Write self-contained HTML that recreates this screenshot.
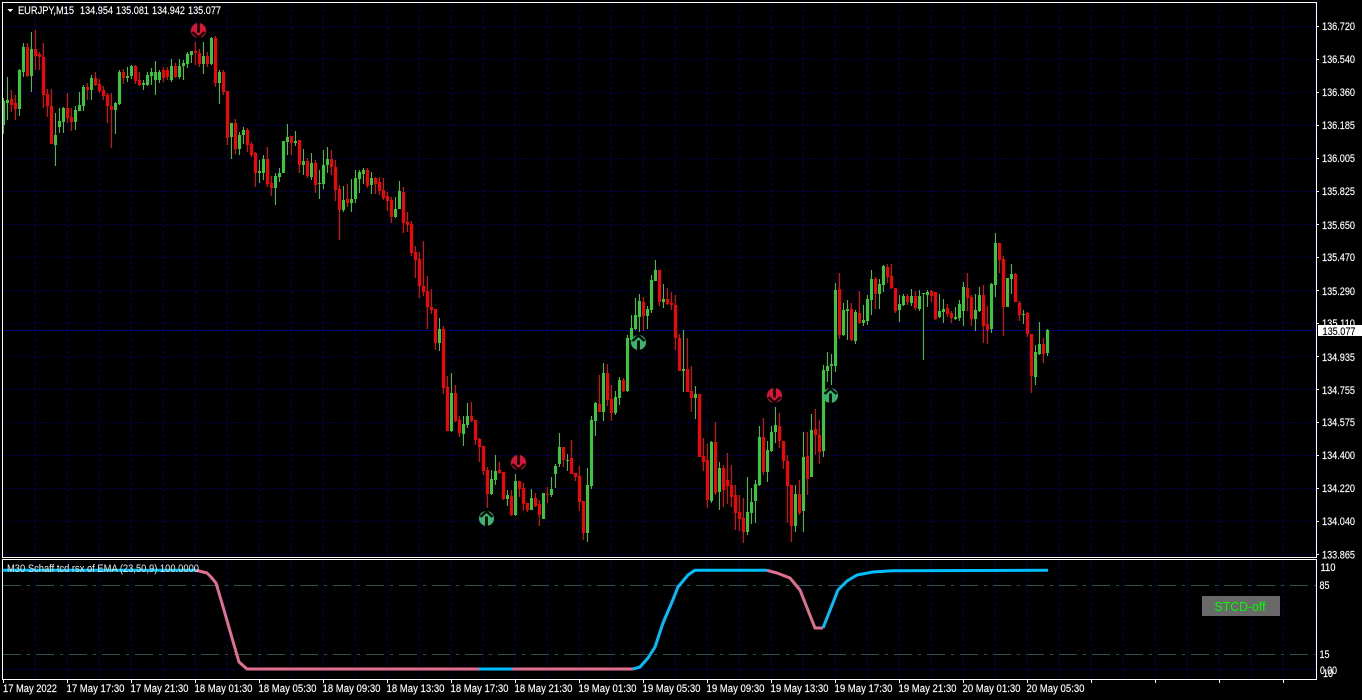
<!DOCTYPE html>
<html lang="en">
<head>
<meta charset="utf-8">
<title>EURJPY,M15</title>
<style>
html,body{margin:0;padding:0;background:#000;width:1362px;height:700px;overflow:hidden}
svg{display:block}
text{font-family:"Liberation Sans",Arial,sans-serif;font-size:11px;fill:#fff;stroke:#fff;stroke-width:.15px}
</style>
</head>
<body>
<svg width="1362" height="700" viewBox="0 0 1362 700" xmlns="http://www.w3.org/2000/svg">
<rect width="1362" height="700" fill="#000"/>
<!-- grid -->
<g shape-rendering="crispEdges" fill="none" stroke="#00005a" stroke-width="1" stroke-dasharray="3 3">
<path d="M3 26.5H1316M3 59.5H1316M3 92.5H1316M3 125.5H1316M3 158.5H1316M3 191.5H1316M3 224.5H1316M3 257.5H1316M3 290.5H1316M3 323.5H1316M3 356.5H1316M3 389.5H1316M3 422.5H1316M3 455.5H1316M3 488.5H1316M3 521.5H1316M3 554.5H1316M3 669.5H1316"/>
<path d="M35.5 3V557M67.5 3V557M99.5 3V557M131.5 3V557M163.5 3V557M195.5 3V557M227.5 3V557M259.5 3V557M291.5 3V557M323.5 3V557M355.5 3V557M387.5 3V557M419.5 3V557M451.5 3V557M483.5 3V557M515.5 3V557M547.5 3V557M579.5 3V557M611.5 3V557M643.5 3V557M675.5 3V557M707.5 3V557M739.5 3V557M771.5 3V557M803.5 3V557M835.5 3V557M867.5 3V557M899.5 3V557M931.5 3V557M963.5 3V557M995.5 3V557M1027.5 3V557M1059.5 3V557M1091.5 3V557M1123.5 3V557M1155.5 3V557M1187.5 3V557M1219.5 3V557M1251.5 3V557M1283.5 3V557M1315.5 3V557"/>
<path d="M35.5 560V679M67.5 560V679M99.5 560V679M131.5 560V679M163.5 560V679M195.5 560V679M227.5 560V679M259.5 560V679M291.5 560V679M323.5 560V679M355.5 560V679M387.5 560V679M419.5 560V679M451.5 560V679M483.5 560V679M515.5 560V679M547.5 560V679M579.5 560V679M611.5 560V679M643.5 560V679M675.5 560V679M707.5 560V679M739.5 560V679M771.5 560V679M803.5 560V679M835.5 560V679M867.5 560V679M899.5 560V679M931.5 560V679M963.5 560V679M995.5 560V679M1027.5 560V679M1059.5 560V679M1091.5 560V679M1123.5 560V679M1155.5 560V679M1187.5 560V679M1219.5 560V679M1251.5 560V679M1283.5 560V679M1315.5 560V679"/>
</g>
<!-- current price line -->
<path d="M3 330.5H1316" stroke="#000070" stroke-width="1" shape-rendering="crispEdges"/>
<!-- green wicks -->
<path shape-rendering="crispEdges" fill="none" stroke="#32cd32" stroke-width="1" d="M3.5 98V134M7.5 77V120M19.5 69V116M23.5 43V77M31.5 32V92M55.5 113V166M59.5 108V133M63.5 107V133M75.5 106V130M79.5 92V111M83.5 85V111M91.5 75V100M115.5 102V134M119.5 70V105M127.5 67V82M131.5 65V79M143.5 80V90M147.5 72V86M151.5 68V85M155.5 61V95M159.5 70V83M171.5 59V82M179.5 59V79M183.5 60V80M187.5 52V68M191.5 51V63M203.5 42V74M211.5 37V65M219.5 70V104M231.5 123V159M239.5 132V155M243.5 127V144M259.5 160V183M263.5 155V180M275.5 173V205M279.5 168V182M283.5 141V173M287.5 124V155M295.5 131V146M303.5 149V175M311.5 153V180M319.5 170V199M323.5 150V189M327.5 147V173M343.5 186V212M351.5 179V212M355.5 170V203M359.5 170V193M363.5 168V184M371.5 172V194M395.5 197V218M399.5 181V209M439.5 318V351M451.5 373V432M463.5 416V446M467.5 403V428M491.5 470V495M495.5 455V485M507.5 490V506M515.5 474V516M531.5 489V510M543.5 493V519M551.5 477V497M555.5 464V488M559.5 433V467M567.5 454V471M587.5 468V542M591.5 416V489M595.5 402V436M603.5 363V421M615.5 391V415M619.5 377V405M627.5 335V392M631.5 315V340M635.5 298V330M639.5 294V332M647.5 306V329M651.5 275V313M655.5 260V281M663.5 284V308M683.5 330V392M695.5 386V419M711.5 441V503M719.5 462V510M747.5 477V535M751.5 488V524M755.5 480V523M759.5 426V486M767.5 441V482M771.5 426V452M775.5 407V443M795.5 485V532M803.5 432V532M811.5 414V477M823.5 365V457M827.5 352V382M831.5 354V385M835.5 283V372M843.5 303V336M847.5 300V340M855.5 310V344M863.5 305V326M867.5 295V325M871.5 270V315M879.5 279V309M883.5 265V292M899.5 295V322M903.5 294V306M911.5 289V306M919.5 290V311M923.5 293V360M927.5 290V307M939.5 294V318M943.5 299V323M955.5 307V320M959.5 300V321M963.5 282V326M975.5 294V331M979.5 287V312M991.5 283V333M995.5 233V297M1007.5 278V307M1011.5 264V294M1023.5 310V324M1035.5 345V385M1039.5 322V355M1047.5 329V356"/>
<!-- green bodies -->
<path shape-rendering="crispEdges" fill="none" stroke="#32cd32" stroke-width="3" d="M3.5 101V125M7.5 100V103M19.5 70V109M23.5 47V72M31.5 49V76M55.5 135V145M59.5 121V127M63.5 108V122M75.5 110V122M79.5 105V111M83.5 87V106M91.5 78V90M115.5 103V110M119.5 72V104M127.5 76V78M131.5 66V76M143.5 83V85M147.5 75V85M151.5 72V76M155.5 72V80M159.5 72V80M171.5 66V80M179.5 66V77M183.5 63V66M187.5 54V64M191.5 51V55M203.5 56V64M211.5 38V64M219.5 72V83M231.5 123V137M239.5 135V149M243.5 130V135M259.5 171V173M263.5 159V173M275.5 176V188M279.5 173V177M283.5 141V173M287.5 137V142M295.5 141V143M303.5 161V165M311.5 163V177M319.5 183V184M323.5 165V184M327.5 159V165M343.5 200V210M351.5 199V203M355.5 178V199M359.5 172V179M363.5 170V174M371.5 178V185M395.5 209V217M399.5 191V209M439.5 329V343M451.5 393V431M463.5 424V434M467.5 416V425M491.5 479V494M495.5 471V480M507.5 495V499M515.5 481V515M531.5 498V510M543.5 493V519M551.5 489V495M555.5 466V474M559.5 447V464M567.5 460V461M587.5 485V533M591.5 420V486M595.5 403V421M603.5 373V412M615.5 397V413M619.5 380V398M627.5 338V391M631.5 328V340M635.5 315V329M639.5 301V317M647.5 309V316M651.5 280V310M655.5 270V281M663.5 299V302M683.5 369V371M695.5 394V398M711.5 442V501M719.5 468V492M747.5 512V532M751.5 502V513M755.5 484V501M759.5 437V485M767.5 450V472M771.5 432V451M775.5 425V432M795.5 494V526M803.5 457V511M811.5 430V477M823.5 370V451M827.5 366V371M831.5 364V366M835.5 290V366M843.5 310V335M847.5 309V311M855.5 312V341M863.5 320V323M867.5 299V321M871.5 279V300M879.5 284V294M883.5 266V285M899.5 304V310M903.5 296V305M911.5 296V303M919.5 296V309M923.5 293V294M927.5 292V295M939.5 311V317M943.5 309V312M955.5 317V319M959.5 304V318M963.5 287V311M975.5 310V319M979.5 295V311M991.5 284V329M995.5 243V285M1007.5 278V307M1011.5 274V279M1023.5 314V315M1035.5 352V377M1039.5 344V354M1047.5 330V353"/>
<!-- red wicks -->
<path shape-rendering="crispEdges" fill="none" stroke="#ff0000" stroke-width="1" d="M11.5 90V112M15.5 95V120M27.5 43V77M35.5 30V70M39.5 52V70M43.5 43V108M47.5 89V117M51.5 89V144M67.5 93V123M71.5 108V131M87.5 83V100M95.5 72V86M99.5 79V93M103.5 86V100M107.5 93V123M111.5 93V148M123.5 69V84M135.5 65V84M139.5 72V86M163.5 67V82M167.5 67V80M175.5 63V78M195.5 42V65M199.5 49V67M207.5 52V67M215.5 36V87M223.5 70V95M227.5 91V145M235.5 119V154M247.5 128V152M251.5 142V157M255.5 152V187M267.5 147V187M271.5 176V196M291.5 136V155M299.5 140V173M307.5 158V178M315.5 160V193M331.5 150V175M335.5 160V201M339.5 185V240M347.5 184V207M367.5 168V188M375.5 177V194M379.5 177V195M383.5 178V200M387.5 192V211M391.5 197V223M403.5 187V233M407.5 212V232M411.5 221V256M415.5 246V278M419.5 252V298M423.5 241V296M427.5 276V329M431.5 289V314M435.5 309V350M443.5 326V394M447.5 376V431M455.5 385V422M459.5 416V437M471.5 402V422M475.5 420V445M479.5 438V462M483.5 446V475M487.5 467V508M499.5 462V474M503.5 472V500M511.5 490V516M519.5 481V497M523.5 483V511M527.5 503V512M535.5 493V507M539.5 500V526M547.5 487V503M563.5 447V467M571.5 440V474M575.5 473V481M579.5 466V511M583.5 501V540M599.5 375V412M607.5 364V406M611.5 385V421M623.5 378V392M643.5 297V331M659.5 270V306M667.5 288V305M671.5 292V310M675.5 295V350M679.5 334V371M687.5 338V392M691.5 366V412M699.5 394V457M703.5 438V471M707.5 444V508M715.5 422V495M723.5 465V507M727.5 453V504M731.5 465V507M735.5 485V530M739.5 495V531M743.5 498V543M763.5 418V475M779.5 413V448M783.5 441V469M787.5 455V523M791.5 485V542M799.5 480V515M807.5 432V495M815.5 409V455M819.5 420V464M839.5 273V339M851.5 303V341M859.5 291V324M875.5 277V309M887.5 264V283M891.5 264V289M895.5 288V313M907.5 294V305M915.5 291V310M931.5 290V302M935.5 292V320M947.5 304V317M951.5 311V323M967.5 273V311M971.5 295V326M983.5 285V343M987.5 306V344M999.5 243V273M1003.5 256V336M1015.5 273V302M1019.5 301V321M1027.5 312V337M1031.5 334V393M1043.5 338V363"/>
<!-- red bodies -->
<path shape-rendering="crispEdges" fill="none" stroke="#ff0000" stroke-width="3" d="M11.5 99V105M15.5 103V109M27.5 47V76M35.5 49V56M39.5 54V57M43.5 57V95M47.5 94V106M51.5 106V144M67.5 108V118M71.5 117V122M87.5 87V90M95.5 78V85M99.5 84V91M103.5 90V96M107.5 95V106M111.5 106V110M123.5 72V78M135.5 66V81M139.5 80V85M163.5 70V78M167.5 70V77M175.5 66V77M195.5 51V53M199.5 53V64M207.5 56V64M215.5 38V83M223.5 72V92M227.5 91V138M235.5 123V149M247.5 130V145M251.5 144V155M255.5 153V173M267.5 159V184M271.5 183V188M291.5 136V143M299.5 140V165M307.5 161V176M315.5 163V185M331.5 159V167M335.5 167V190M339.5 189V210M347.5 199V203M367.5 170V186M375.5 178V184M379.5 182V191M383.5 190V198M387.5 196V201M391.5 200V217M403.5 192V223M407.5 222V225M411.5 224V253M415.5 252V260M419.5 259V286M423.5 286V292M427.5 291V307M431.5 307V310M435.5 309V343M443.5 329V388M447.5 387V431M455.5 393V421M459.5 420V433M471.5 416V421M475.5 420V440M479.5 439V447M483.5 446V471M487.5 470V494M499.5 470V473M503.5 472V499M511.5 496V515M519.5 481V489M523.5 488V504M527.5 503V510M535.5 498V506M539.5 504V515M547.5 494V495M563.5 447V460M571.5 458V474M575.5 473V477M579.5 476V502M583.5 501V533M599.5 404V412M607.5 373V400M611.5 399V413M623.5 380V391M643.5 302V316M659.5 270V302M667.5 299V304M671.5 303V305M675.5 305V338M679.5 338V371M687.5 369V392M691.5 391V398M699.5 394V457M703.5 456V462M707.5 460V500M715.5 442V493M723.5 468V490M727.5 480V486M731.5 485V497M735.5 495V513M739.5 512V519M743.5 518V532M763.5 437V472M779.5 426V441M783.5 441V461M787.5 461V486M791.5 485V526M799.5 494V513M807.5 456V479M815.5 429V435M819.5 435V452M839.5 289V335M851.5 309V340M859.5 313V323M875.5 279V294M887.5 267V277M891.5 276V288M895.5 288V311M907.5 296V302M915.5 296V308M931.5 291V296M935.5 292V319M947.5 308V314M951.5 313V318M967.5 288V298M971.5 297V319M983.5 295V326M987.5 324V330M999.5 243V260M1003.5 259V307M1015.5 274V302M1019.5 303V315M1027.5 313V334M1031.5 334V376M1043.5 344V354"/>
<!-- markers -->
<g>
<g transform="translate(198.5,30.5)"><circle r="7.5" fill="#dc143c"/><rect x="-1.5" y="-8" width="3" height="10" fill="#120105"/><path d="M-6 1.5L0 7L6 1.5" fill="none" stroke="#120105" stroke-width="2.5"/></g>
<g transform="translate(518.5,462.5)"><circle r="7.5" fill="#dc143c"/><rect x="-1.5" y="-8" width="3" height="10" fill="#120105"/><path d="M-6 1.5L0 7L6 1.5" fill="none" stroke="#120105" stroke-width="2.5"/></g>
<g transform="translate(774.5,395.5)"><circle r="7.5" fill="#dc143c"/><rect x="-1.5" y="-8" width="3" height="10" fill="#120105"/><path d="M-6 1.5L0 7L6 1.5" fill="none" stroke="#120105" stroke-width="2.5"/></g>
<g transform="translate(486.5,518.5)"><circle r="7.5" fill="#3cb371"/><rect x="-1.5" y="-2" width="3" height="10" fill="#020e08"/><path d="M-6 -1.5L0 -7L6 -1.5" fill="none" stroke="#020e08" stroke-width="2.5"/></g>
<g transform="translate(638.5,342.5)"><circle r="7.5" fill="#3cb371"/><rect x="-1.5" y="-2" width="3" height="10" fill="#020e08"/><path d="M-6 -1.5L0 -7L6 -1.5" fill="none" stroke="#020e08" stroke-width="2.5"/></g>
<g transform="translate(830.5,395.5)"><circle r="7.5" fill="#3cb371"/><rect x="-1.5" y="-2" width="3" height="10" fill="#020e08"/><path d="M-6 -1.5L0 -7L6 -1.5" fill="none" stroke="#020e08" stroke-width="2.5"/></g>
</g>
<!-- indicator levels -->
<path d="M3 585.5H1316M3 654.5H1316" stroke="#2f4f4f" stroke-width="1" stroke-dasharray="18 6 3 6" shape-rendering="crispEdges"/>
<!-- indicator line -->
<g fill="none" stroke-width="3" stroke-linejoin="round">
<path stroke="#00bfff" d="M3 570.3H196"/>
<path stroke="#e0708f" d="M196 570.3L199 571L207 573L211 577L216 583L224 610L232 638L239 662L247 669H479"/>
<path stroke="#00bfff" d="M479 669H512"/>
<path stroke="#e0708f" d="M512 669H633"/>
<path stroke="#00bfff" d="M633 669L640 667L648 658L655 647L663 623L672 602L678 587L688 575L695 570.3H767"/>
<path stroke="#e0708f" d="M767 570.3L777 573L790 578L800 590L815 628H823"/>
<path stroke="#00bfff" d="M823 628L838 590L847 581L857 575L873 572L893 570.7L1048 570.3"/>
</g>
<!-- frames -->
<g shape-rendering="crispEdges" fill="none" stroke="#fff" stroke-width="1">
<rect x="2.5" y="2.5" width="1314" height="555"/>
<rect x="2.5" y="559.5" width="1314" height="120"/>
<path d="M1317 26.5h2M1317 59.5h2M1317 92.5h2M1317 125.5h2M1317 158.5h2M1317 191.5h2M1317 224.5h2M1317 257.5h2M1317 290.5h2M1317 323.5h2M1317 356.5h2M1317 389.5h2M1317 422.5h2M1317 455.5h2M1317 488.5h2M1317 521.5h2M1317 554.5h2"/>
<path d="M3.5 680v3M67.5 680v3M131.5 680v3M195.5 680v3M259.5 680v3M323.5 680v3M387.5 680v3M451.5 680v3M515.5 680v3M579.5 680v3M643.5 680v3M707.5 680v3M771.5 680v3M835.5 680v3M899.5 680v3M963.5 680v3M1027.5 680v3M1091.5 680v3M1155.5 680v3M1219.5 680v3M1283.5 680v3"/>
</g>
<!-- header -->
<path d="M7 9h6l-3 3z" fill="#fff" shape-rendering="crispEdges"/>
<text x="18" y="14" textLength="56" lengthAdjust="spacingAndGlyphs">EURJPY,M15</text>
<text x="80" y="14" textLength="33" lengthAdjust="spacingAndGlyphs">134.954</text>
<text x="116" y="14" textLength="33" lengthAdjust="spacingAndGlyphs">135.081</text>
<text x="152" y="14" textLength="33" lengthAdjust="spacingAndGlyphs">134.942</text>
<text x="188" y="14" textLength="33" lengthAdjust="spacingAndGlyphs">135.077</text>
<text x="7" y="572" textLength="192" lengthAdjust="spacingAndGlyphs" style="fill:#e8e8e8;stroke:none">M30 Schaff tcd rsx of EMA (23,50,9) 100.0000</text>
<!-- prices -->
<g>
<text x="1322" y="30" textLength="33" lengthAdjust="spacingAndGlyphs">136.720</text>
<text x="1322" y="63" textLength="33" lengthAdjust="spacingAndGlyphs">136.540</text>
<text x="1322" y="96" textLength="33" lengthAdjust="spacingAndGlyphs">136.360</text>
<text x="1322" y="129" textLength="33" lengthAdjust="spacingAndGlyphs">136.185</text>
<text x="1322" y="162" textLength="33" lengthAdjust="spacingAndGlyphs">136.005</text>
<text x="1322" y="195" textLength="33" lengthAdjust="spacingAndGlyphs">135.825</text>
<text x="1322" y="229" textLength="33" lengthAdjust="spacingAndGlyphs">135.650</text>
<text x="1322" y="261" textLength="33" lengthAdjust="spacingAndGlyphs">135.470</text>
<text x="1322" y="295" textLength="33" lengthAdjust="spacingAndGlyphs">135.290</text>
<text x="1322" y="327" textLength="33" lengthAdjust="spacingAndGlyphs">135.110</text>
<text x="1322" y="361" textLength="33" lengthAdjust="spacingAndGlyphs">134.935</text>
<text x="1322" y="394" textLength="33" lengthAdjust="spacingAndGlyphs">134.755</text>
<text x="1322" y="426" textLength="33" lengthAdjust="spacingAndGlyphs">134.575</text>
<text x="1322" y="459" textLength="33" lengthAdjust="spacingAndGlyphs">134.400</text>
<text x="1322" y="492" textLength="33" lengthAdjust="spacingAndGlyphs">134.220</text>
<text x="1322" y="525" textLength="33" lengthAdjust="spacingAndGlyphs">134.040</text>
<text x="1322" y="558.500" textLength="33" lengthAdjust="spacingAndGlyphs">133.865</text>
</g>
<rect x="1318" y="325" width="44" height="11" fill="#fff" shape-rendering="crispEdges"/>
<text x="1322.500" y="335" textLength="33" lengthAdjust="spacingAndGlyphs" style="fill:#000;stroke:#000">135.077</text>
<!-- indicator scale -->
<text x="1320.500" y="571" textLength="15" lengthAdjust="spacingAndGlyphs">110</text>
<text x="1319.500" y="589" textLength="10" lengthAdjust="spacingAndGlyphs">85</text>
<text x="1319.500" y="658" textLength="10" lengthAdjust="spacingAndGlyphs">15</text>
<text x="1320" y="674" textLength="17" lengthAdjust="spacingAndGlyphs">0.00</text>
<text x="1323" y="677" textLength="10" lengthAdjust="spacingAndGlyphs">10</text>
<!-- STCD box -->
<rect x="1202" y="596" width="78" height="20" fill="#696969" shape-rendering="crispEdges"/>
<text x="1214.500" y="611" textLength="51" lengthAdjust="spacingAndGlyphs" style="font-size:13px;fill:#00ff00;stroke:none">STCD-off</text>
<!-- time axis -->
<g>
<text x="3" y="692" textLength="54" lengthAdjust="spacingAndGlyphs">17 May 2022</text>
<text x="66.500" y="692" textLength="58" lengthAdjust="spacingAndGlyphs">17 May 17:30</text>
<text x="130.500" y="692" textLength="58" lengthAdjust="spacingAndGlyphs">17 May 21:30</text>
<text x="194.500" y="692" textLength="58" lengthAdjust="spacingAndGlyphs">18 May 01:30</text>
<text x="258.500" y="692" textLength="58" lengthAdjust="spacingAndGlyphs">18 May 05:30</text>
<text x="322.500" y="692" textLength="58" lengthAdjust="spacingAndGlyphs">18 May 09:30</text>
<text x="386.500" y="692" textLength="58" lengthAdjust="spacingAndGlyphs">18 May 13:30</text>
<text x="450.500" y="692" textLength="58" lengthAdjust="spacingAndGlyphs">18 May 17:30</text>
<text x="514.500" y="692" textLength="58" lengthAdjust="spacingAndGlyphs">18 May 21:30</text>
<text x="578.500" y="692" textLength="58" lengthAdjust="spacingAndGlyphs">19 May 01:30</text>
<text x="642.500" y="692" textLength="58" lengthAdjust="spacingAndGlyphs">19 May 05:30</text>
<text x="706.500" y="692" textLength="58" lengthAdjust="spacingAndGlyphs">19 May 09:30</text>
<text x="770.500" y="692" textLength="58" lengthAdjust="spacingAndGlyphs">19 May 13:30</text>
<text x="834.500" y="692" textLength="58" lengthAdjust="spacingAndGlyphs">19 May 17:30</text>
<text x="898.500" y="692" textLength="58" lengthAdjust="spacingAndGlyphs">19 May 21:30</text>
<text x="962.500" y="692" textLength="58" lengthAdjust="spacingAndGlyphs">20 May 01:30</text>
<text x="1026.500" y="692" textLength="58" lengthAdjust="spacingAndGlyphs">20 May 05:30</text>
</g>
</svg>
</body>
</html>
